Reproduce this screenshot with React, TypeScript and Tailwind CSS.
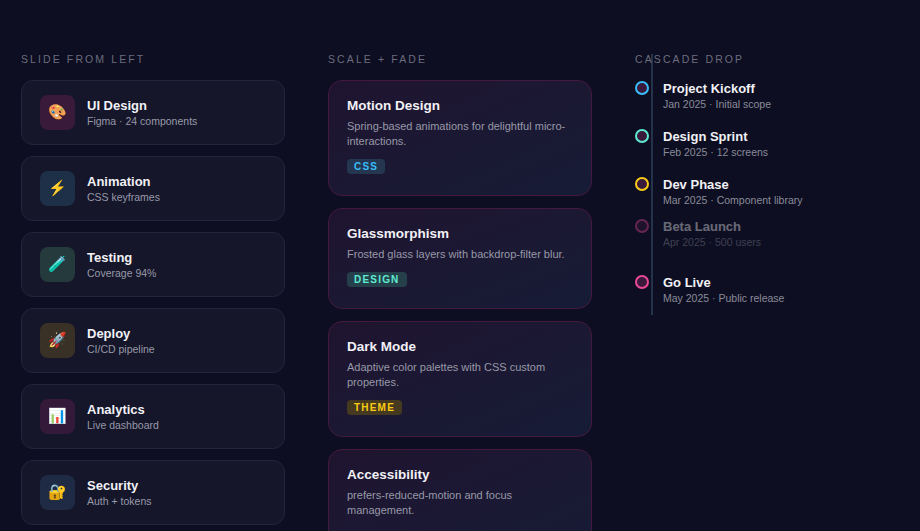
const left = [
  { icon: "🎨", bg: "bg-[#3a1a3a]", title: "UI Design", sub: "Figma · 24 components" },
  { icon: "⚡", bg: "bg-[#1d3048]", title: "Animation", sub: "CSS keyframes" },
  { icon: "🧪", bg: "bg-[#253a3c]", title: "Testing", sub: "Coverage 94%" },
  { icon: "🚀", bg: "bg-[#3a3126]", title: "Deploy", sub: "CI/CD pipeline" },
  { icon: "📊", bg: "bg-[#34193a]", title: "Analytics", sub: "Live dashboard" },
  { icon: "🔐", bg: "bg-[#1f2b44]", title: "Security", sub: "Auth + tokens" },
];

const mid = [
  { title: "Motion Design", desc: "Spring-based animations for delightful micro-interactions.", tag: "CSS", tagCls: "bg-[#243650] text-[#38bdf8]" },
  { title: "Glassmorphism", desc: "Frosted glass layers with backdrop-filter blur.", tag: "DESIGN", tagCls: "bg-[#25404a] text-[#5eead4]" },
  { title: "Dark Mode", desc: "Adaptive color palettes with CSS custom properties.", tag: "THEME", tagCls: "bg-[#45391f] text-[#facc15]" },
  { title: "Accessibility", desc: "prefers-reduced-motion and focus management.", tag: "A11Y", tagCls: "text-white" },
];

const timeline = [
  { title: "Project Kickoff", sub: "Jan 2025 · Initial scope", ring: "border-[#38bdf8]", cls: "mb-[17px]" },
  { title: "Design Sprint", sub: "Feb 2025 · 12 screens", ring: "border-[#5eead4]", cls: "mb-[17px]" },
  { title: "Dev Phase", sub: "Mar 2025 · Component library", ring: "border-[#facc15]", cls: "mb-[11px]" },
  { title: "Beta Launch", sub: "Apr 2025 · 500 users", ring: "border-[#ec4899]", cls: "mb-[25px] opacity-40" },
  { title: "Go Live", sub: "May 2025 · Public release", ring: "border-[#ec4899]", cls: "" },
];

export default function App() {
  return (
    <div
      className="h-[531px] w-[920px] overflow-hidden bg-[#0d0e21] text-white"
      style={{ fontFamily: '"Liberation Sans", Arial, sans-serif' }}
    >
      <div className="flex gap-[43px] px-[21px] pt-[52px]">
        <div className="w-[264px] shrink-0">
          <div className="mb-[14px] text-[10.5px] leading-[14px] tracking-[0.2em] text-[#6b6c7d]">SLIDE FROM LEFT</div>
          <div className="flex flex-col gap-[11px]">
            {left.map((c) => (
              <div key={c.title} className="flex h-[65px] items-center gap-[12px] rounded-[12px] border border-[#24253a] bg-[#15162a] px-[18px]">
                <div className={`flex h-[35px] w-[35px] items-center justify-center rounded-[8px] text-[15px] ${c.bg}`}>{c.icon}</div>
                <div>
                  <div className="text-[13px] font-bold leading-[17px] text-[#f1f1f6]">{c.title}</div>
                  <div className="text-[10.5px] leading-[14px] text-[#9899a8]">{c.sub}</div>
                </div>
              </div>
            ))}
          </div>
        </div>
        <div className="w-[264px] shrink-0">
          <div className="mb-[14px] text-[10.5px] leading-[14px] tracking-[0.2em] text-[#6b6c7d]">SCALE + FADE</div>
          <div className="flex flex-col gap-[12px]">
            {mid.map((c) => (
              <div key={c.title} className="rounded-[14px] border border-[#45193f] bg-gradient-to-br from-[#1f1430] to-[#161c36] px-[18px] pb-[18px] pt-[16px]">
                <div className="text-[13.5px] font-bold leading-[18px] text-[#f1f1f6]">{c.title}</div>
                <div className="mt-[4px] text-[11px] leading-[15px] text-[#9899a8]">{c.desc}</div>
                <span className={`mt-[10px] inline-block rounded-[4px] px-[7px] py-[1px] text-[10px] font-bold leading-[13px] tracking-[0.12em] ${c.tagCls}`}>{c.tag}</span>
              </div>
            ))}
          </div>
        </div>
        <div className="relative w-[220px]">
          <div className="absolute left-[16px] top-[2px] h-[261px] w-[2px] bg-[#24324a]" />
          <div className="relative mb-[14px] text-[10.5px] leading-[14px] tracking-[0.2em] text-[#6b6c7d]">CASCADE DROP</div>
          <div className="relative flex flex-col">
            {timeline.map((t) => (
              <div key={t.title} className={`flex items-start gap-[14px] ${t.cls}`}>
                <div className={`mt-[1px] h-[14px] w-[14px] rounded-full border-2 bg-[#3a1a3a] ${t.ring}`} />
                <div>
                  <div className="text-[13px] font-bold leading-[17px] text-[#f1f1f6]">{t.title}</div>
                  <div className="text-[10.5px] leading-[14px] text-[#8a8b9a]">{t.sub}</div>
                </div>
              </div>
            ))}
          </div>
        </div>
      </div>
    </div>
  );
}
